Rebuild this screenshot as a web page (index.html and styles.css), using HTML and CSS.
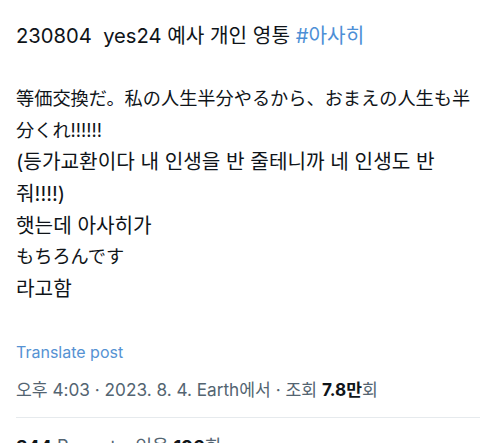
FILE: index.html
```html
<!DOCTYPE html>
<html lang="ko">
<head>
<meta charset="utf-8">
<link rel="stylesheet" href="styles.css">
</head>
<body>
<article class="post">
  <div class="post-text">
    <p class="line">230804&nbsp; yes24 예사 개인 영통 <span class="tag">#아사히</span></p>
    <p class="line blank">&nbsp;</p>
    <p class="line ja" lang="ja">等価交換だ。私の人生半分やるから、おまえの人生も半分くれ!!!!!!</p>
    <p class="line">(등가교환이다 내 인생을 반 줄테니까 네 인생도 반 줘!!!!)</p>
    <p class="line">햇는데 아사히가</p>
    <p class="line ja" lang="ja">もちろんです</p>
    <p class="line">라고함</p>
  </div>
  <a class="translate">Translate post</a>
  <div class="meta">오후 4:03 · 2023. 8. 4. Earth에서 · 조회 <b>7.8만</b>회</div>
  <div class="stats"><span><b>344</b> Reposts</span><span>인용 <b>196</b>회</span></div>
</article>
</body>
</html>
```
FILE: styles.css
```css
html, body { margin: 0; padding: 0; background: #fff; }
body {
  font-family: "Inter", "Noto Sans CJK KR", "Noto Sans CJK JP", sans-serif;
  color: #0f1419;
  overflow: hidden;
}
.post { padding: 20px 0 0 16px; }
.post-text { font-size: 20.2px; line-height: 31.6px; width: 458px; }
.line { margin: 0; }
.line.ja { font-size: 18.2px; }
.tag { color: #4d8fd6; }
.translate {
  display: block;
  margin-top: 38px;
  font-size: 16px;
  line-height: 20px;
  color: #5592d3;
}
.meta {
  margin-top: 18px;
  font-size: 17.2px;
  line-height: 20px;
  color: #536471;
  padding-bottom: 17px;
  border-bottom: 1px solid #e6eaed;
}
.meta b { color: #0f1419; font-weight: 700; }
.stats {
  display: flex;
  gap: 10px;
  padding-top: 19px;
  font-size: 18px;
  line-height: 20px;
  color: #536471;
}
.stats b { color: #0f1419; font-weight: 700; }
```
